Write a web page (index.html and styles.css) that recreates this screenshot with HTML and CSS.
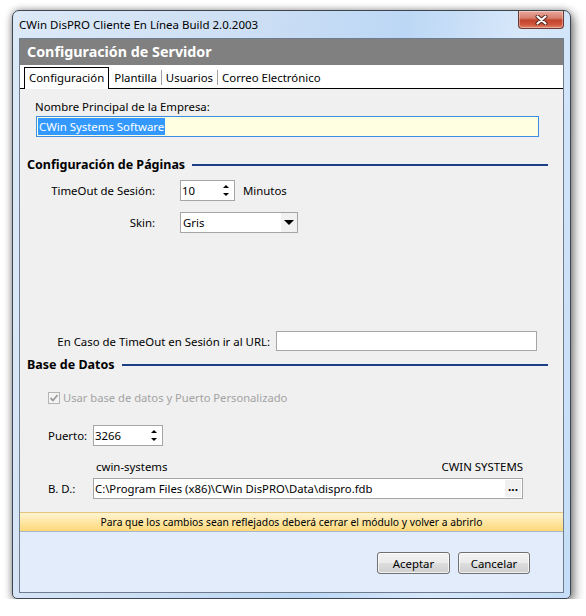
FILE: index.html
```html
<!DOCTYPE html>
<html lang="es">
<head>
    <meta charset="UTF-8">
    <title>CWin DisPRO Cliente En Línea Build 2.0.2003</title>
    <link rel="stylesheet" href="styles.css">
</head>
<body>

<div class="window">
    <div class="titlebar">
        <span class="title">CWin DisPRO Cliente En Línea Build 2.0.2003</span>
        <div class="close-btn">
            <svg width="13" height="10" viewBox="0 0 13 10">
                <path d="M2.5 1.5 L10.5 8.5 M10.5 1.5 L2.5 8.5" stroke="#4a2018" stroke-width="4" stroke-linecap="round" fill="none"/>
                <path d="M2.5 1.5 L10.5 8.5 M10.5 1.5 L2.5 8.5" stroke="#ffffff" stroke-width="2.2" stroke-linecap="round" fill="none"/>
            </svg>
        </div>
    </div>

    <div class="client">
        <div class="header">Configuración de Servidor</div>

        <div class="tabs">
            <span class="tab active">Configuración</span>
            <span class="tab">Plantilla</span>
            <span class="tab sep">Usuarios</span>
            <span class="tab sep">Correo Electrónico</span>
        </div>

        <div class="content">
            <div class="company">
                <div class="company-label">Nombre Principal de la Empresa:</div>
                <div class="textbox focused"><span class="selected">CWin Systems Software</span></div>
            </div>

            <div class="section first">Configuración de Páginas</div>

            <div class="row">
                <span class="row-label">TimeOut de Sesión:</span>
                <div class="spinner small">
                    <span class="spin-value">10</span>
                    <span class="spin-btns"><i class="up"></i><i class="down"></i></span>
                </div>
                <span class="unit">Minutos</span>
            </div>

            <div class="row skin">
                <span class="row-label">Skin:</span>
                <div class="combo">
                    <span class="combo-value">Gris</span>
                    <span class="combo-arrow"><i></i></span>
                </div>
            </div>

            <div class="row url">
                <span class="row-label wide">En Caso de TimeOut en Sesión ir al URL:</span>
                <div class="textbox url-box"></div>
            </div>

            <div class="section">Base de Datos</div>

            <div class="check-row">
                <span class="checkbox">
                    <svg width="10" height="10" viewBox="0 0 10 10">
                        <path d="M1.5 5 L4 7.5 L8.5 2" stroke="#9c9c9c" stroke-width="1.8" fill="none"/>
                    </svg>
                </span>
                <span>Usar base de datos y Puerto Personalizado</span>
            </div>

            <div class="row db port">
                <span class="db-label">Puerto:</span>
                <div class="spinner wide">
                    <span class="spin-value">3266</span>
                    <span class="spin-btns"><i class="up"></i><i class="down"></i></span>
                </div>
            </div>

            <div class="db-names">
                <span>cwin-systems</span>
                <span>CWIN SYSTEMS</span>
            </div>

            <div class="row db path">
                <span class="db-label">B. D.:</span>
                <div class="textbox path-box">
                    <span class="path-value">C:\Program Files (x86)\CWin DisPRO\Data\dispro.fdb</span>
                    <span class="browse">...</span>
                </div>
            </div>
        </div>

        <div class="notice">Para que los cambios sean reflejados deberá cerrar el módulo y volver a abrirlo</div>

        <div class="footer">
            <button class="btn ok">Aceptar</button>
            <button class="btn">Cancelar</button>
        </div>
    </div>
</div>

</body>
</html>
```

FILE: styles.css
```css
* {
    box-sizing: border-box;
}

body {
    margin: 0;
    background-color: #ffffff;
    font-family: "Noto Sans", "Liberation Sans", sans-serif;
    font-size: 11.4px;
    color: #000000;
}

/* window frame */
.window {
    margin: 10px 0 0 12px;
    width: 559px;
    height: 589px;
    border: 1px solid #3c4550;
    border-radius: 7px 7px 5px 5px;
    background: linear-gradient(100deg, #dce9f7 0%, #cddff4 35%, #bcd7f5 60%, #d8e8fa 78%, #c5ddf7 100%);
    box-shadow: 0 0 7px rgba(0, 0, 0, 0.35), 3px 5px 12px rgba(0, 0, 0, 0.45);
    display: flex;
    flex-direction: column;
}

.titlebar {
    height: 27px;
    display: flex;
    justify-content: space-between;
    align-items: flex-start;
    padding: 0 6px 0 6px;
}

.title {
    margin-top: 6px;
    line-height: 16px;
    font-size: 11.5px;
}

.close-btn {
    width: 46px;
    height: 18px;
    border: 1px solid #6a3a32;
    border-top: none;
    border-radius: 0 0 4px 4px;
    background: linear-gradient(#e9a99c 0%, #d8806f 40%, #c2432c 55%, #d0573e 80%, #e0846c 100%);
    box-shadow: inset 0 0 0 1px rgba(255, 255, 255, 0.35);
    display: flex;
    align-items: center;
    justify-content: center;
}

.client {
    flex: 1;
    margin: 0 6px 5px 6px;
    border: 1px solid #6e7c8e;
    background-color: #f0f0f0;
    display: flex;
    flex-direction: column;
}

.header {
    height: 26px;
    line-height: 26px;
    padding-left: 7px;
    background-color: #808080;
    color: #ffffff;
    font-size: 14.3px;
    font-weight: bold;
}

/* tabs */
.tabs {
    height: 24px;
    padding-left: 4px;
    background-color: #ffffff;
    border-bottom: 1px solid #000000;
    display: flex;
    align-items: flex-end;
}

.tab {
    height: 21px;
    line-height: 21px;
    padding: 0 4px 0 5px;
}

.tab.sep {
    background: linear-gradient(#a0a0a0, #a0a0a0) left center / 1px 15px no-repeat;
}

.tab.active {
    height: 22px;
    line-height: 20px;
    margin-bottom: -1px;
    padding: 0 4px;
    border: 1px solid #000000;
    border-bottom: none;
    background-color: #ffffff;
}

/* page content */
.content {
    flex: 1;
    padding-top: 10px;
}

.company-label {
    margin-left: 15px;
    line-height: 16px;
}

.textbox {
    height: 21px;
    border: 1px solid #a5a5a5;
    background-color: #ffffff;
}

.textbox.focused {
    margin: 1px 0 0 16px;
    width: 503px;
    padding: 1px 0 0 1px;
    border-color: #3c8ee0;
    background-color: #ffffe1;
}

.selected {
    display: inline-block;
    line-height: 17px;
    padding: 0 1px;
    background-color: #3399ff;
    color: #ffffff;
}

.section {
    margin: 6px 15px 0 7px;
    line-height: 16px;
    font-size: 12.5px;
    font-weight: bold;
    display: flex;
    align-items: center;
    gap: 7px;
}

.section.first {
    margin-top: 20px;
}

.section::after {
    content: "";
    flex: 1;
    height: 2px;
    background-color: #1c3f8a;
}

.row {
    height: 21px;
    margin-top: 7px;
    display: flex;
    align-items: center;
}

.row.skin {
    margin-top: 11px;
}

.row.url {
    height: 20px;
    margin-top: 98px;
}

.row-label {
    width: 135px;
    margin-right: 25px;
    text-align: right;
}

.row-label.wide {
    width: 250px;
    margin-right: 6px;
}

.url-box {
    width: 261px;
    height: 20px;
}

.unit {
    margin-left: 8px;
}

/* spin edit */
.spinner {
    height: 21px;
    border: 1px solid #a5a5a5;
    background-color: #ffffff;
    display: flex;
}

.spinner.small {
    width: 55px;
}

.spinner.wide {
    width: 70px;
}

.spin-value {
    flex: 1;
    padding-left: 1px;
    line-height: 19px;
}

.spin-btns {
    width: 17px;
    display: flex;
    flex-direction: column;
}

.spin-btns i {
    flex: 1;
    display: flex;
    align-items: center;
    justify-content: center;
}

.spin-btns i::before {
    content: "";
    border-left: 3px solid transparent;
    border-right: 3px solid transparent;
}

.spin-btns .up::before {
    border-bottom: 3px solid #000000;
    margin-top: 2px;
}

.spin-btns .down::before {
    border-top: 3px solid #000000;
    margin-bottom: 1px;
}

/* combo box */
.combo {
    width: 118px;
    height: 21px;
    border: 1px solid #a5a5a5;
    background-color: #ffffff;
    display: flex;
}

.combo-value {
    flex: 1;
    padding-left: 2px;
    line-height: 19px;
}

.combo-arrow {
    width: 16px;
    background-color: #f1f1f1;
    display: flex;
    align-items: center;
    justify-content: center;
}

.combo-arrow i {
    border-left: 5px solid transparent;
    border-right: 5px solid transparent;
    border-top: 5px solid #000000;
}

/* database */
.check-row {
    margin: 17px 0 0 28px;
    line-height: 16px;
    font-size: 11.2px;
    color: #a3a3a3;
    display: flex;
    align-items: center;
    gap: 3px;
}

.checkbox {
    width: 12px;
    height: 12px;
    border: 1px solid #b4b4b4;
    background-color: #f4f4f4;
    display: flex;
    align-items: center;
    justify-content: center;
}

.row.db {
    padding-left: 28px;
}

.row.port {
    margin-top: 19px;
}

.row.path {
    margin-top: 3px;
}

.db-label {
    width: 45px;
}

.db-names {
    margin-top: 13px;
    padding: 0 40px 0 76px;
    line-height: 16px;
    display: flex;
    justify-content: space-between;
}

.path-box {
    width: 430px;
    display: flex;
    align-items: center;
    padding: 0 1px 0 1px;
}

.path-value {
    flex: 1;
    line-height: 19px;
    font-size: 11.3px;
}

.browse {
    width: 16px;
    height: 17px;
    line-height: 13px;
    text-align: center;
    font-weight: bold;
    font-size: 12px;
    background-color: #f0f0f0;
}

/* bottom */
.notice {
    height: 20px;
    line-height: 18px;
    font-size: 10.3px;
    text-align: center;
    border-top: 1px solid #e6c479;
    border-bottom: 1px solid #a9b7cb;
    background: linear-gradient(#fff4d2, #fdd877);
}

.footer {
    height: 60px;
    padding: 20px 33px 0 0;
    background-color: #e2ecfa;
    display: flex;
    justify-content: flex-end;
    align-items: flex-start;
    gap: 8px;
}

.btn {
    width: 72px;
    height: 22px;
    padding: 0;
    font-family: inherit;
    font-size: 11.4px;
    color: #000000;
    border: 1px solid #707070;
    border-radius: 3px;
    background: linear-gradient(#f3f3f3 0%, #ebebeb 48%, #dddddd 52%, #cfcfcf 100%);
    box-shadow: inset 0 0 0 1px rgba(255, 255, 255, 0.7);
}

.btn.ok {
    width: 73px;
}
```
